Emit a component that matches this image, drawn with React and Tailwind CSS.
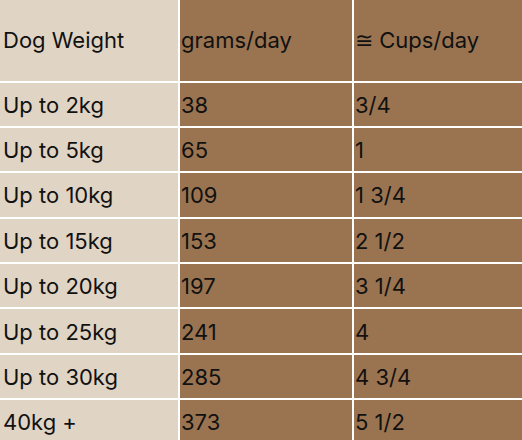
import React from 'react';

const rows = [
    ['Up to 2kg', '38', '3/4'],
    ['Up to 5kg', '65', '1'],
    ['Up to 10kg', '109', '1 3/4'],
    ['Up to 15kg', '153', '2 1/2'],
    ['Up to 20kg', '197', '3 1/4'],
    ['Up to 25kg', '241', '4'],
    ['Up to 30kg', '285', '4 3/4'],
    ['40kg +', '373', '5 1/2'],
];

const App = () => {
    return (
        <div className="w-[522px] h-[440px] overflow-hidden bg-white font-['Inter',sans-serif] text-[22px] text-[#111]">
            <div className="grid grid-cols-[178px_172px_168px] auto-rows-[43.4px] grid-rows-[80.5px] gap-x-[2px] gap-y-[2px]">
                <div className="bg-[#e0d4c4] flex items-center pl-[3px]">Dog Weight</div>
                <div className="bg-[#9a7450] flex items-center pl-[1px]">grams/day</div>
                <div className="bg-[#9a7450] flex items-center pl-[1px]">≅ Cups/day</div>
                {rows.map((row, i) => (
                    <React.Fragment key={i}>
                        <div className="bg-[#e0d4c4] flex items-center pl-[3px] pt-[2px]">{row[0]}</div>
                        <div className="bg-[#9a7450] flex items-center pl-[1px] pt-[2px]">{row[1]}</div>
                        <div className="bg-[#9a7450] flex items-center pl-[1px] pt-[2px]">{row[2]}</div>
                    </React.Fragment>
                ))}
            </div>
        </div>
    );
};

export default App;
